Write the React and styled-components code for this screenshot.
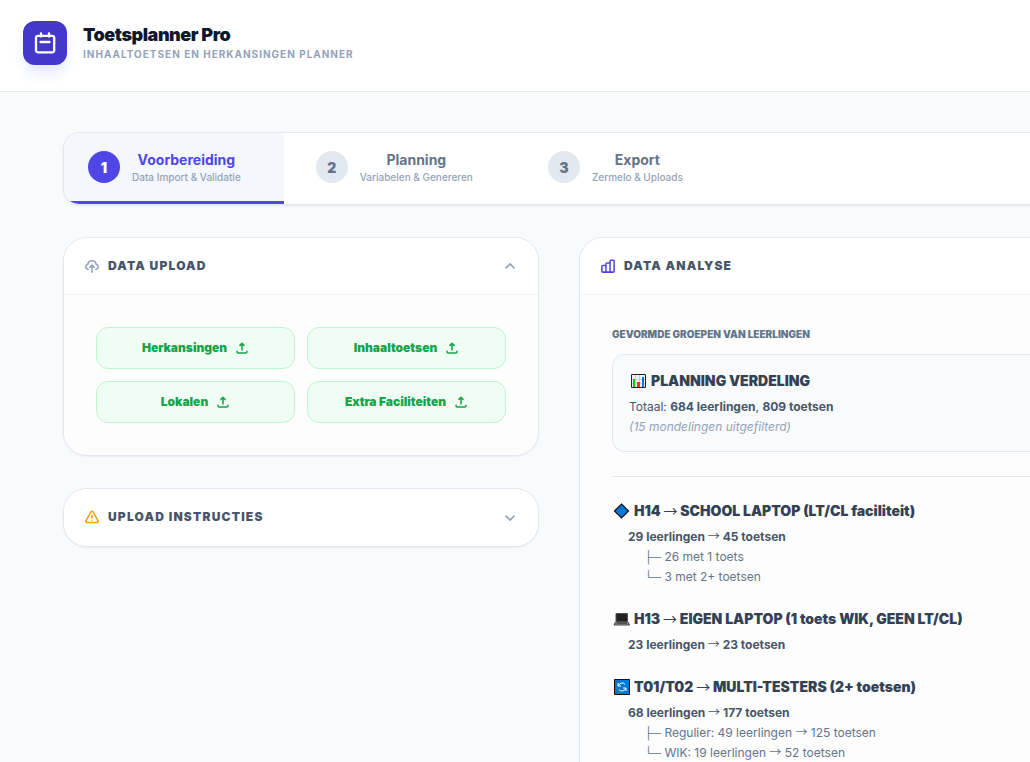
import React from 'react';
import styled, { createGlobalStyle, css } from 'styled-components';

const GlobalStyle = createGlobalStyle`
  * {
    box-sizing: border-box;
  }

  body {
    margin: 0;
    background: #f8fafc;
    color: #334155;
    font-family: Inter, "Liberation Sans", sans-serif;
    font-size: 12px;
  }

  h1, h2, h3, p, ul {
    margin: 0;
    padding: 0;
  }

  button {
    font-family: inherit;
    cursor: pointer;
  }
`;

const Page = styled.div`
  min-height: 100vh;
  overflow-x: hidden;
`;

const Header = styled.header`
  display: flex;
  align-items: center;
  gap: 16px;
  padding: 21px 23px 26px;
  background: #fff;
  border-bottom: 1px solid #e2e8f0;
`;

const Logo = styled.div`
  display: flex;
  align-items: center;
  justify-content: center;
  width: 44px;
  height: 44px;
  border-radius: 12px;
  background: #4338ca;
  color: #fff;
  box-shadow: 0 10px 15px -3px #e0e7ff, 0 4px 6px -4px #e0e7ff;
`;

const Brand = styled.h1`
  color: #0f172a;
  font-size: 18px;
  font-weight: 900;
  line-height: 23px;
  letter-spacing: -0.025em;
`;

const Tagline = styled.p`
  padding-bottom: 2px;
  color: #94a3b8;
  font-size: 10px;
  font-weight: 700;
  line-height: 16px;
  letter-spacing: 0.1em;
  text-transform: uppercase;
`;

const Main = styled.main`
  display: flex;
  flex-direction: column;
  gap: 32px;
  min-width: 1594px;
  padding: 40px 63px;
`;

const Tabs = styled.nav`
  display: flex;
  gap: 8px;
  overflow: hidden;
  background: #fff;
  border: 1px solid #e2e8f0;
  border-radius: 16px;
  box-shadow: 0 1px 2px rgba(15, 23, 42, .08);
`;

const StepNumber = styled.span`
  display: flex;
  align-items: center;
  justify-content: center;
  width: 32px;
  height: 32px;
  border-radius: 50%;
  background: #e2e8f0;
  color: #64748b;
  font-size: 14px;
  font-weight: 900;
`;

const StepTitle = styled.span`
  display: block;
  color: #64748b;
  font-size: 14px;
  font-weight: 700;
  line-height: 21px;
`;

const StepInfo = styled.span`
  display: block;
  color: #94a3b8;
  font-size: 10px;
  font-weight: 500;
  line-height: 15px;
`;

const Tab = styled.button`
  display: flex;
  align-items: center;
  gap: 12px;
  padding: 16px 43px 16px 24px;
  background: transparent;
  border: 0;
  border-bottom: 3px solid transparent;

  ${props => props.$active && css`
    background: #f5f7ff;
    border-bottom-color: #4f46e5;

    ${StepNumber} {
      background: #4f46e5;
      color: #fff;
    }

    ${StepTitle} {
      color: #4f46e5;
    }
  `}
`;

const Columns = styled.div`
  display: grid;
  grid-template-columns: 476px 1fr;
  align-items: start;
  gap: 40px;
`;

const Stack = styled.div`
  display: flex;
  flex-direction: column;
  gap: 32px;
`;

const Card = styled.section`
  overflow: hidden;
  background: #fff;
  border: 1px solid #e2e8f0;
  border-radius: 24px;
  box-shadow: 0 1px 2px rgba(15, 23, 42, .06);
`;

const CardHeader = styled.div`
  display: flex;
  align-items: center;
  gap: 9px;
  width: 100%;
  height: 57px;
  padding: 0 23px 0 21px;
  background: #fff;
  border: 0;
  border-bottom: 1px solid ${props => (props.$closed ? 'transparent' : '#f1f5f9')};
  color: ${props => props.$color};
`;

const CardTitle = styled.h2`
  flex: 1;
  color: #475569;
  font-size: 12px;
  font-weight: 900;
  line-height: 16px;
  letter-spacing: 0.1em;
  text-align: left;
  text-transform: uppercase;
`;

const CardBody = styled.div`
  padding: 32px;
  background: #fdfdfd;
`;

const Chevron = styled.svg`
  color: #94a3b8;
`;

const UploadGrid = styled.div`
  display: grid;
  grid-template-columns: 1fr 1fr;
  gap: 12px;
`;

const UploadButton = styled.button`
  display: flex;
  align-items: center;
  justify-content: center;
  gap: 8px;
  height: 42px;
  padding: 0 8px 1px;
  background: #f0fdf4;
  border: 1px solid #bbf7d0;
  border-radius: 12px;
  color: #16a34a;
  font-size: 12px;
  font-weight: 900;
`;

const Caption = styled.h3`
  margin-bottom: 12px;
  color: #64748b;
  font-size: 10px;
  font-weight: 900;
  line-height: 15px;
  text-transform: uppercase;
`;

const Summary = styled.div`
  padding: 16px 16px 14px;
  margin-bottom: 24px;
  background: #f8fafc;
  border: 1px solid #e2e8f0;
  border-radius: 12px;
`;

const Groups = styled.div`
  display: flex;
  flex-direction: column;
  gap: 22px;
  padding-top: 24px;
  border-top: 1px solid #e2e8f0;
`;

const GroupTitle = styled.h3`
  display: flex;
  align-items: center;
  gap: 4px;
  margin-bottom: 6px;
  color: #334155;
  font-size: 14px;
  font-weight: 900;
  line-height: 20px;
`;

const Line = styled.p`
  color: #475569;
  font-size: 12px;
  line-height: 20px;
`;

const Note = styled(Line)`
  color: #94a3b8;
  font-style: italic;
`;

const Count = styled(Line)`
  padding-left: 16px;
  font-weight: 700;
`;

const Tree = styled.ul`
  padding-left: 32px;
  list-style: none;
`;

const Branch = styled.li`
  color: #64748b;
  font-size: 12px;
  line-height: 20px;
`;

const Glyph = styled.span`
  font-family: "Liberation Sans", Arial, sans-serif;
  font-weight: 400;
  line-height: 0;
`;

const ArrowGlyph = styled(Glyph)`
  font-family: "Noto Sans CJK JP", sans-serif;
`;

const Arrow = () => <ArrowGlyph>→</ArrowGlyph>;

const Icon = ({ size = 14, stroke = 2.6, children }) => (
  <svg
    width={size}
    height={size}
    viewBox="0 0 24 24"
    fill="none"
    stroke="currentColor"
    strokeWidth={stroke}
    strokeLinecap="round"
    strokeLinejoin="round"
    aria-hidden="true"
  >
    {children}
  </svg>
);

const CalendarIcon = () => (
  <Icon size={24} stroke={2.3}>
    <rect x="3" y="4.800" width="18.200" height="16.500" rx="2" />
    <path d="M8 2.500v3M16 2.500v3M7.500 11h9" />
  </Icon>
);

const CloudUploadIcon = () => (
  <Icon>
    <path d="M5.500 18a4.600 4.600 0 0 1-.7-9 7.300 7.300 0 0 1 14.400 0 4.600 4.600 0 0 1-.7 9M12 22.700V11M8 14.500l4-4 4 4" />
  </Icon>
);

const ChartIcon = () => (
  <Icon>
    <path d="M1.500 12.500A1.500 1.500 0 0 1 3 11h5.500v11.500H3A1.500 1.500 0 0 1 1.500 21zM8.500 8.500A1.500 1.500 0 0 1 10 7h5.500v15.500h-7zM15.500 3.500A1.500 1.500 0 0 1 17 2h4a1.500 1.500 0 0 1 1.500 1.500V21a1.500 1.500 0 0 1-1.500 1.500h-5.500z" />
  </Icon>
);

const WarningIcon = () => (
  <Icon>
    <path d="M10.300 3 1.500 18.500A2 2 0 0 0 3.200 21.500h17.600a2 2 0 0 0 1.700-3L13.700 3a2 2 0 0 0-3.400 0z" />
    <path d="M12 9v4.500M12 17.500v.1" />
  </Icon>
);

const UploadIcon = () => (
  <Icon>
    <path d="M3.500 17.500v1a2 2 0 0 0 2 2h13a2 2 0 0 0 2-2v-1M12 15.500V5M8.500 7.500 12 4l3.500 3.500" />
  </Icon>
);

const Toggle = ({ open }) => (
  <Chevron width="10" height="10" viewBox="0 0 10 10" fill="none" stroke="currentColor" strokeWidth="1.600" aria-hidden="true">
    <path d={open ? 'M.5 7.500 5 3l4.500 4.500' : 'M.5 3.500 5 8l4.500-4.500'} />
  </Chevron>
);

const Emoji = ({ name }) => (
  <svg width="18" height="16" viewBox="-1 0 18 16" aria-hidden="true">
    {name === 'chart' && (
      <>
        <path d="M1.500 1.500h14v13h-14z" fill="#f2f2f2" stroke="#222" />
        <path d="M5.500 2v12M9.500 2v12M2 6.500h13M2 10.500h13" stroke="#ccc" />
        <path d="M3 6h2v8H3z" fill="#16c60c" />
        <path d="M7 9h3v5H7z" fill="#f03a17" />
        <path d="M12 4h2v10h-2z" fill="#0078d7" />
      </>
    )}
    {name === 'diamond' && (
      <path d="m8.500 1 7 7-7 7-7-7z" fill="#0078d7" stroke="#111" strokeWidth="1.200" />
    )}
    {name === 'laptop' && (
      <>
        <path d="M3 2.500h11.500v8H3z" fill="#222" stroke="#555" />
        <path d="M2.500 11h12.500l1.500 3H1z" fill="#999" stroke="#444" />
        <path d="M3.500 12.200h10.500" stroke="#333" />
      </>
    )}
    {name === 'cycle' && (
      <>
        <path d="M1.500.5h15v15h-15z" fill="#0078d7" stroke="#111" />
        <path d="M5.200 7a4 4 0 0 1 7-1.500M12.800 9a4 4 0 0 1-7 1.500M5 4v3h3M13 12V9h-3" fill="none" stroke="#fff" />
      </>
    )}
  </svg>
);

const steps = [
  { title: 'Voorbereiding', info: 'Data Import & Validatie' },
  { title: 'Planning', info: 'Variabelen & Genereren' },
  { title: 'Export', info: 'Zermelo & Uploads' }
];

const uploads = ['Herkansingen', 'Inhaaltoetsen', 'Lokalen', 'Extra Faciliteiten'];

const groups = [
  {
    icon: 'diamond',
    code: 'H14',
    label: 'SCHOOL LAPTOP (LT/CL faciliteit)',
    students: '29 leerlingen',
    tests: '45 toetsen',
    branches: [['26 met 1 toets'], ['3 met 2+ toetsen']]
  },
  {
    icon: 'laptop',
    code: 'H13',
    label: 'EIGEN LAPTOP (1 toets WIK, GEEN LT/CL)',
    students: '23 leerlingen',
    tests: '23 toetsen',
    branches: []
  },
  {
    icon: 'cycle',
    code: 'T01/T02',
    label: 'MULTI-TESTERS (2+ toetsen)',
    students: '68 leerlingen',
    tests: '177 toetsen',
    branches: [
      ['Regulier: 49 leerlingen', '125 toetsen'],
      ['WIK: 19 leerlingen', '52 toetsen']
    ]
  }
];

const Group = ({ icon, code, label, students, tests, branches }) => (
  <div>
    <GroupTitle>
      <Emoji name={icon} />
      <span>{code} <Arrow /> {label}</span>
    </GroupTitle>
    <Count>{students} <Arrow /> {tests}</Count>
    {branches.length > 0 && (
      <Tree>
        {branches.map(([from, to], i) => (
          <Branch key={from}>
            <Glyph>{i < branches.length - 1 ? '├─' : '└─'}</Glyph> {from}
            {to && <> <Arrow /> {to}</>}
          </Branch>
        ))}
      </Tree>
    )}
  </div>
);

const App = () => (
  <Page>
    <GlobalStyle />
    <Header>
      <Logo><CalendarIcon /></Logo>
      <div>
        <Brand>Toetsplanner Pro</Brand>
        <Tagline>Inhaaltoetsen en herkansingen planner</Tagline>
      </div>
    </Header>
    <Main>
      <Tabs>
        {steps.map((step, i) => (
          <Tab key={step.title} type="button" $active={i === 0}>
            <StepNumber>{i + 1}</StepNumber>
            <span>
              <StepTitle>{step.title}</StepTitle>
              <StepInfo>{step.info}</StepInfo>
            </span>
          </Tab>
        ))}
      </Tabs>
      <Columns>
        <Stack>
          <Card>
            <CardHeader as="button" type="button" aria-expanded="true" $color="#94a3b8">
              <CloudUploadIcon />
              <CardTitle>Data upload</CardTitle>
              <Toggle open />
            </CardHeader>
            <CardBody>
              <UploadGrid>
                {uploads.map(name => (
                  <UploadButton key={name} type="button">
                    {name}
                    <UploadIcon />
                  </UploadButton>
                ))}
              </UploadGrid>
            </CardBody>
          </Card>
          <Card>
            <CardHeader as="button" type="button" aria-expanded="false" $color="#f59e0b" $closed>
              <WarningIcon />
              <CardTitle>Upload instructies</CardTitle>
              <Toggle />
            </CardHeader>
          </Card>
        </Stack>
        <Card>
          <CardHeader $color="#4f46e5">
            <ChartIcon />
            <CardTitle>Data analyse</CardTitle>
          </CardHeader>
          <CardBody>
            <Caption>Gevormde groepen van leerlingen</Caption>
            <Summary>
              <GroupTitle>
                <Emoji name="chart" />
                <span>PLANNING VERDELING</span>
              </GroupTitle>
              <Line>Totaal: <b>684 leerlingen</b>, <b>809 toetsen</b></Line>
              <Note>(15 mondelingen uitgefilterd)</Note>
            </Summary>
            <Groups>
              {groups.map(group => <Group key={group.code} {...group} />)}
            </Groups>
          </CardBody>
        </Card>
      </Columns>
    </Main>
  </Page>
);

export default App;
